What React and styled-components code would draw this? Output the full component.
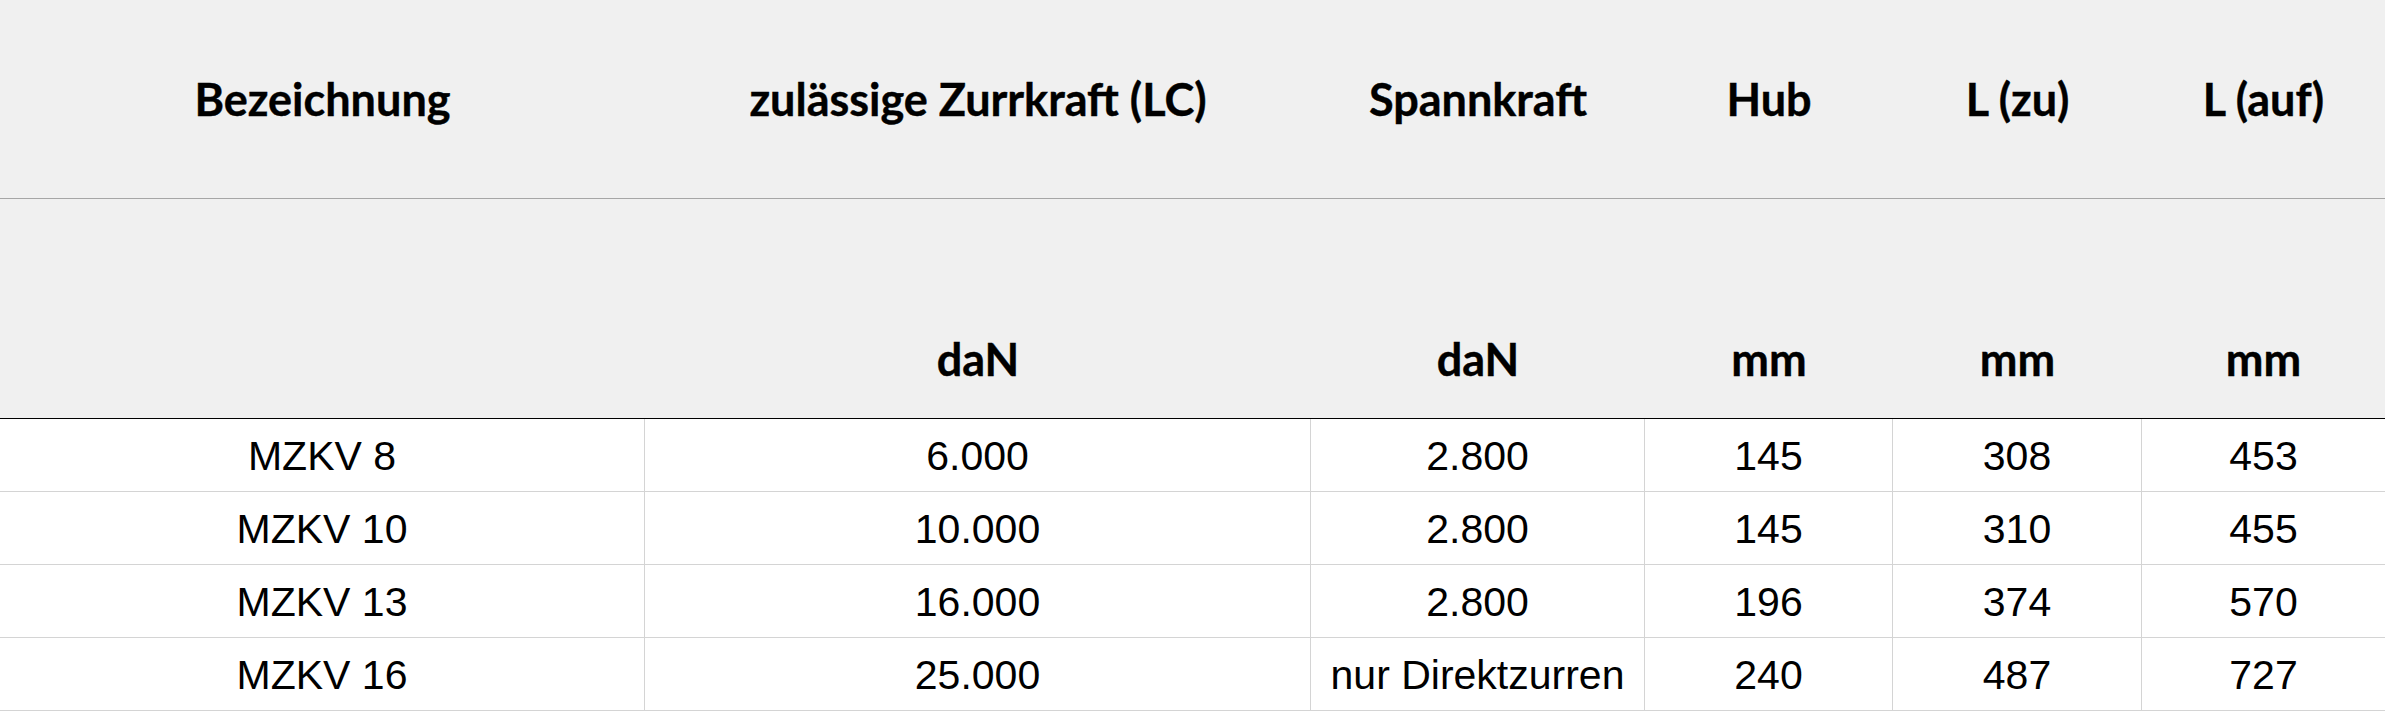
import React from "react";
import styled, { createGlobalStyle } from "styled-components";

const GlobalStyle = createGlobalStyle`
  html, body {
    margin: 0;
    padding: 0;
    background: #ffffff;
  }
  * {
    box-sizing: border-box;
  }
`;

const columns = [
  { title: "Bezeichnung", unit: "" },
  { title: "zulässige Zurrkraft (LC)", unit: "daN" },
  { title: "Spannkraft", unit: "daN" },
  { title: "Hub", unit: "mm" },
  { title: "L (zu)", unit: "mm" },
  { title: "L (auf)", unit: "mm" },
];

const rows = [
  ["MZKV 8", "6.000", "2.800", "145", "308", "453"],
  ["MZKV 10", "10.000", "2.800", "145", "310", "455"],
  ["MZKV 13", "16.000", "2.800", "196", "374", "570"],
  ["MZKV 16", "25.000", "nur Direktzurren", "240", "487", "727"],
];

const Table = styled.div`
  display: grid;
  grid-template-columns: 645px 666px 334px 248px 249px 243px;
  width: 2385px;
`;

const HeadCell = styled.div`
  display: flex;
  justify-content: center;
  align-items: ${(props) => (props.$unit ? "flex-end" : "center")};
  height: ${(props) => (props.$unit ? "220px" : "199px")};
  padding-bottom: ${(props) => (props.$unit ? "32px" : "0")};
  background: #f0f0f0;
  border-bottom: 1px solid ${(props) => (props.$unit ? "#000000" : "#a6a6a6")};
  font-family: Lato, "Open Sans", sans-serif;
  font-weight: 700;
  font-size: 45px;
  color: #000000;
  white-space: nowrap;
  -webkit-text-stroke: 0.4px #000000;
`;

const BodyCell = styled.div`
  display: flex;
  justify-content: center;
  align-items: center;
  height: 73px;
  padding-top: 2px;
  border-bottom: 1px solid #d4d4d4;
  border-right: ${(props) => (props.$last ? "none" : "1px solid #d4d4d4")};
  font-family: "Liberation Sans", Arial, sans-serif;
  font-size: 41px;
  color: #000000;
  white-space: nowrap;
`;

export default function App() {
  return (
    <>
      <GlobalStyle />
      <Table>
        {columns.map((col) => (
          <HeadCell key={col.title}>{col.title}</HeadCell>
        ))}
        {columns.map((col) => (
          <HeadCell key={col.title + "-unit"} $unit>
            {col.unit}
          </HeadCell>
        ))}
        {rows.map((row) =>
          row.map((value, i) => (
            <BodyCell key={row[0] + i} $last={i === row.length - 1}>
              {value}
            </BodyCell>
          ))
        )}
      </Table>
    </>
  );
}
